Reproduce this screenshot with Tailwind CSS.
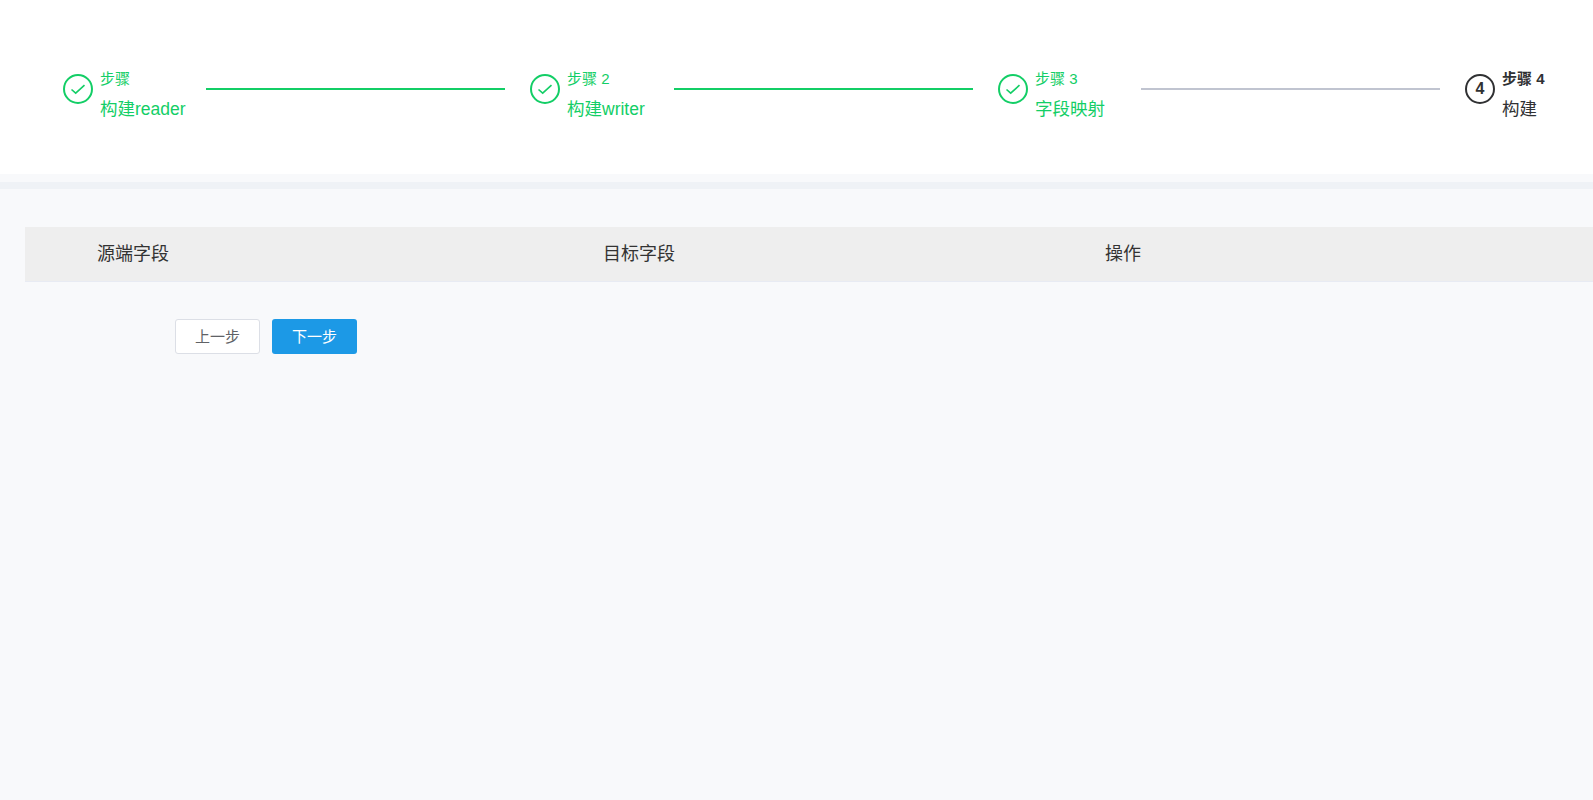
<!DOCTYPE html>
<html lang="zh-CN">
<head>
    <meta charset="UTF-8">
    <title>构建</title>
    <script src="https://cdn.jsdelivr.net/npm/@tailwindcss/browser@4"></script>
</head>
<body class="bg-[#f8f9fb] h-[800px] overflow-hidden font-['Liberation_Sans','Noto_Sans_CJK_SC',sans-serif]">
    <!-- Steps -->
    <div class="bg-white h-[174px] pt-[70px] pl-[63px] flex items-start">
        <div class="flex w-[467px] text-[#13ce66]">
            <div class="w-[30px] h-[30px] mt-1 rounded-full border-2 border-[#13ce66] flex items-center justify-center shrink-0">
                <svg width="16" height="16" viewBox="0 0 16 16" fill="none" stroke="#13ce66" stroke-width="1.6"><path d="M1.5 8.5l4.2 3.7 8.8-8"/></svg>
            </div>
            <div class="ml-[7px] w-[86px] shrink-0">
                <div class="text-[15px] leading-4 mt-px">步骤</div>
                <div class="text-[17.5px] leading-6 mt-2.5">构建reader</div>
            </div>
            <div class="ml-5 mt-[18px] w-[299px] h-0.5 bg-[#13ce66] shrink-0"></div>
        </div>
        <div class="flex w-[468px] text-[#13ce66]">
            <div class="w-[30px] h-[30px] mt-1 rounded-full border-2 border-[#13ce66] flex items-center justify-center shrink-0">
                <svg width="16" height="16" viewBox="0 0 16 16" fill="none" stroke="#13ce66" stroke-width="1.6"><path d="M1.5 8.5l4.2 3.7 8.8-8"/></svg>
            </div>
            <div class="ml-[7px] w-[86px] shrink-0">
                <div class="text-[15px] leading-4 mt-px">步骤 2</div>
                <div class="text-[17.5px] leading-6 mt-2.5">构建writer</div>
            </div>
            <div class="ml-[21px] mt-[18px] w-[299px] h-0.5 bg-[#13ce66] shrink-0"></div>
        </div>
        <div class="flex w-[467px] text-[#13ce66]">
            <div class="w-[30px] h-[30px] mt-1 rounded-full border-2 border-[#13ce66] flex items-center justify-center shrink-0">
                <svg width="16" height="16" viewBox="0 0 16 16" fill="none" stroke="#13ce66" stroke-width="1.6"><path d="M1.5 8.5l4.2 3.7 8.8-8"/></svg>
            </div>
            <div class="ml-[7px] w-[86px] shrink-0">
                <div class="text-[15px] leading-4 mt-px">步骤 3</div>
                <div class="text-[17.5px] leading-6 mt-2.5">字段映射</div>
            </div>
            <div class="ml-5 mt-[18px] w-[299px] h-0.5 bg-[#c0c4d0] shrink-0"></div>
        </div>
        <div class="flex text-[#303133]">
            <div class="w-[30px] h-[30px] mt-1 rounded-full border-2 border-[#303133] flex items-center justify-center shrink-0 text-base font-bold">4</div>
            <div class="ml-[7px] shrink-0">
                <div class="text-[15px] leading-4 mt-px font-bold">步骤 4</div>
                <div class="text-[17.5px] leading-6 mt-2.5">构建</div>
            </div>
        </div>
    </div>

    <!-- Divider -->
    <div class="mt-2 h-[7px] bg-[#eff2f6]"></div>

    <!-- Main -->
    <div class="pt-[38px] pl-[25px]">
        <div class="grid grid-cols-[576px_502px_1fr] h-[55px] items-center bg-[#eeeeee] border-b border-[#e8ebf3] text-[#333333] text-lg pb-px">
            <div class="pl-[72px]">源端字段</div>
            <div class="pl-0.5">目标字段</div>
            <div class="pl-0.5">操作</div>
        </div>
        <div class="flex gap-3 mt-[37px] ml-[150px]">
            <button class="w-[85px] h-[35px] bg-white border border-[#dcdfe6] rounded-[3px] text-[15px] text-[#606266] pt-px">上一步</button>
            <button class="w-[85px] h-[35px] bg-[#1c99e6] rounded-[3px] text-[15px] text-white pt-px">下一步</button>
        </div>
    </div>
</body>
</html>
